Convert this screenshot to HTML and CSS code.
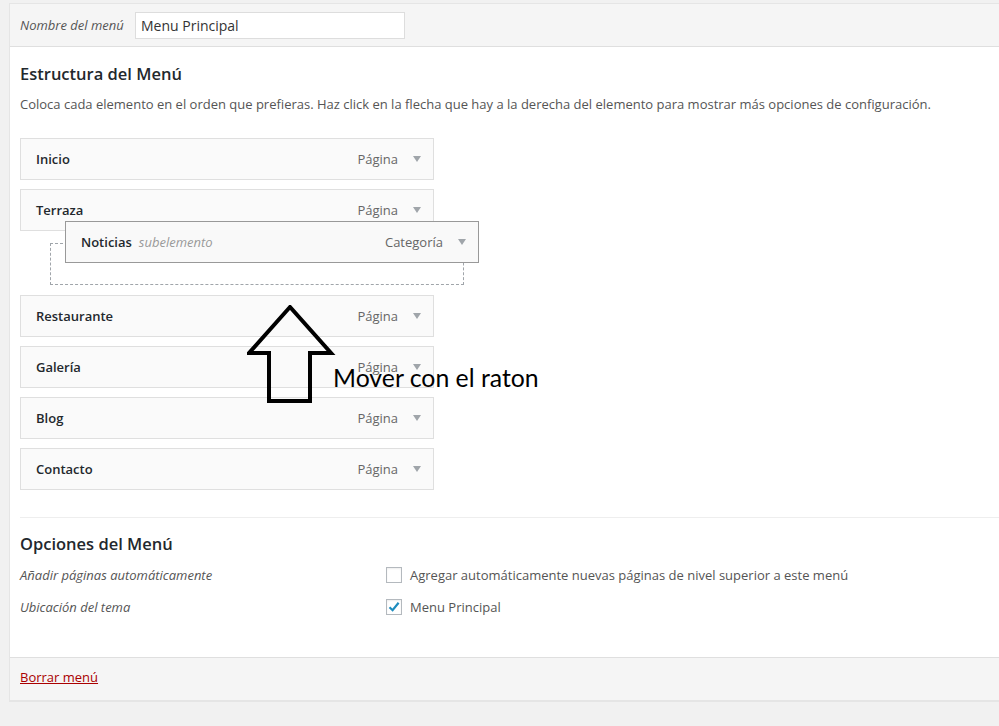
FILE: index.html
```html
<!DOCTYPE html>
<html lang="es">
<head>
<meta charset="utf-8">
<title>Menú</title>
<link rel="stylesheet" href="styles.css">
</head>
<body>
<div class="panel">
  <div class="panel-header">
    <label class="name-label">Nombre del menú</label>
    <input class="name-input" type="text" value="Menu Principal">
  </div>
  <div class="panel-body">
    <h3 class="section-title">Estructura del Menú</h3>
    <p class="desc">Coloca cada elemento en el orden que prefieras. Haz click en la flecha que hay a la derecha del elemento para mostrar más opciones de configuración.</p>
    <div class="menu-list">
      <div class="item"><span class="item-title">Inicio</span><span class="item-type">Página</span><span class="caret"></span></div>
      <div class="item"><span class="item-title">Terraza</span><span class="item-type">Página</span><span class="caret"></span></div>
      <div class="placeholder">
        <div class="item dragging"><span class="item-title">Noticias</span><span class="sub">subelemento</span><span class="item-type">Categoría</span><span class="caret"></span></div>
      </div>
      <div class="item"><span class="item-title">Restaurante</span><span class="item-type">Página</span><span class="caret"></span></div>
      <div class="item"><span class="item-title">Galería</span><span class="item-type">Página</span><span class="caret"></span></div>
      <div class="item"><span class="item-title">Blog</span><span class="item-type">Página</span><span class="caret"></span></div>
      <div class="item"><span class="item-title">Contacto</span><span class="item-type">Página</span><span class="caret"></span></div>
      <div class="annotation">
        <svg class="big-arrow" width="90" height="100" viewBox="0 0 90 100">
          <path d="M43 2 L2 48 L22 48 L22 96 L63 96 L63 48 L84 48 Z" fill="none" stroke="#000" stroke-width="4" stroke-linejoin="miter"/>
        </svg>
        <span class="anno-text">Mover con el raton</span>
      </div>
    </div>
    <div class="options">
      <h3 class="section-title">Opciones del Menú</h3>
      <div class="opt-rows">
        <div class="opt-row">
          <span class="opt-label">Añadir páginas automáticamente</span>
          <span class="opt-value"><span class="cb"></span>Agregar automáticamente nuevas páginas de nivel superior a este menú</span>
        </div>
        <div class="opt-row">
          <span class="opt-label">Ubicación del tema</span>
          <span class="opt-value"><span class="cb checked"><svg width="14" height="14" viewBox="0 0 14 14"><path d="M2.5 7.2 L5.6 10.2 L11.6 2.8" fill="none" stroke="#1e8cbe" stroke-width="2.2"/></svg></span>Menu Principal</span>
        </div>
      </div>
    </div>
  </div>
  <div class="panel-footer">
    <a class="delete-link" href="#">Borrar menú</a>
  </div>
</div>
</body>
</html>
```

FILE: styles.css
```css
* { box-sizing: border-box; }
html, body { margin: 0; padding: 0; }
body {
  background: #f1f1f1;
  font-family: "Open Sans", "Liberation Sans", sans-serif;
  font-size: 13px;
  color: #444;
  width: 999px;
  height: 726px;
  overflow: hidden;
}
.panel {
  margin: 3px 0 0 9px;
  border: 1px solid #e5e5e5;
  border-right: none;
  background: #fff;
}
.panel-header {
  background: #f5f5f5;
  border-bottom: 1px solid #dfdfdf;
  height: 43px;
  display: flex;
  align-items: center;
  padding: 0 10px;
}
.name-label {
  font-style: italic;
  color: #555;
  font-size: 13px;
  width: 115px;
}
.name-input {
  width: 270px;
  height: 27px;
  border: 1px solid #ddd;
  background: #fff;
  font-family: "Open Sans", sans-serif;
  font-size: 14px;
  color: #333;
  padding: 0 5px;
  margin: 0;
  outline: none;
}
.panel-body {
  padding: 0 0 0 10px;
  height: 610px;
}
.section-title {
  margin: 0;
  font-size: 16.5px;
  font-weight: 600;
  color: #23282d;
  line-height: 22px;
}
.panel-body > .section-title { padding-top: 16px; }
.desc {
  margin: 9px 0 0 0;
  line-height: 20px;
  color: #555;
}
.menu-list {
  position: relative;
  margin-top: 24px;
  width: 414px;
}
.item {
  height: 42px;
  border: 1px solid #dfdfdf;
  background: #fafafa;
  display: flex;
  align-items: center;
  padding: 0 12px 0 15px;
  margin-bottom: 9px;
}
.item-title {
  font-weight: 600;
  color: #23282d;
  flex: 1 1 auto;
}
.item-type {
  color: #666;
  margin-right: 15px;
}
.caret {
  width: 0;
  height: 0;
  border-left: 4px solid transparent;
  border-right: 4px solid transparent;
  border-top: 6px solid #a0a5aa;
}
.placeholder {
  position: relative;
  margin: 12px 0 10px 30px;
  width: 414px;
  height: 42px;
  border: 1px dashed #a0a5aa;
}
.item.dragging {
  position: absolute;
  left: 14px;
  top: -23px;
  width: 414px;
  margin: 0;
  border-color: #999;
  background: #f9f9f9;
}
.item.dragging .item-title { flex: 0 0 auto; }
.sub {
  flex: 1 1 auto;
  font-style: italic;
  color: #999;
  margin-left: 7px;
}
.annotation {
  position: absolute;
  left: 227px;
  top: 167px;
  width: 330px;
  height: 100px;
}
.big-arrow {
  position: absolute;
  left: 0;
  top: 0;
}
.anno-text {
  position: absolute;
  left: 86px;
  top: 58px;
  font-family: Lato, "Open Sans", sans-serif;
  font-size: 24.8px;
  color: #000;
  white-space: nowrap;
}
.options {
  margin-top: 27px;
  border-top: 1px solid #eee;
  padding-top: 15px;
}
.opt-rows {
  padding-top: 4px;
}
.opt-row {
  display: flex;
  align-items: center;
  height: 32px;
}
.opt-label {
  width: 366px;
  font-style: italic;
  color: #555;
}
.opt-value {
  display: flex;
  align-items: center;
  color: #555;
}
.cb {
  width: 16px;
  height: 16px;
  border: 1px solid #b4b9be;
  background: #fff;
  margin-right: 8px;
  display: flex;
  align-items: center;
  justify-content: center;
  box-shadow: inset 0 1px 2px rgba(0,0,0,0.07);
}
.panel-footer {
  background: #f5f5f5;
  border-top: 1px solid #dfdfdf;
  height: 44px;
  display: flex;
  align-items: center;
  padding: 0 10px 5px 10px;
  border-bottom: 1px solid #e5e5e5;
}
.delete-link {
  color: #a00;
  text-decoration: underline;
  font-size: 13px;
}
```
